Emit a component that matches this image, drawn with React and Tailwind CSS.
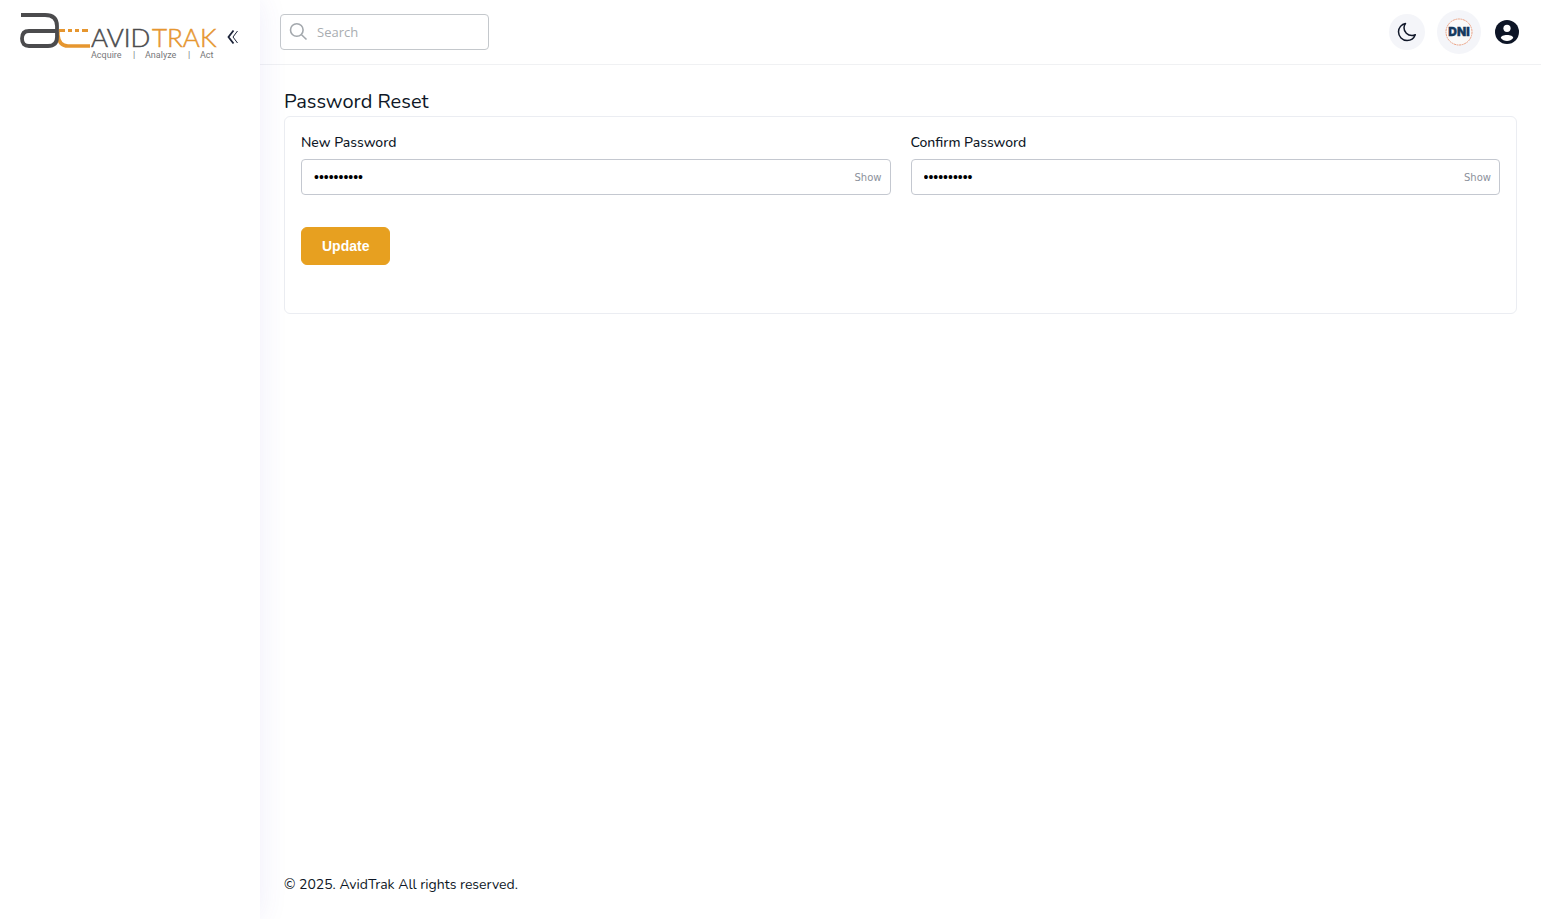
import { useState } from "react";

const Logo = () => (
  <svg width="198" height="50" viewBox="0 0 198 50" role="img" aria-label="AvidTrak">
    <path
      d="M39 18.500h6M48 18.500h4M55 18.500h4M62 18.500h6"
      fill="none"
      stroke="#e6962f"
      strokeWidth="3"
    />
    <path
      d="M38 20v3q1 11 10 11h22"
      fill="none"
      stroke="#e6962f"
      strokeWidth="3.500"
    />
    <path
      d="M1 3h24q12 0 12 11v11q0 9-9 9H9q-7 0-7-7.500t7-7.500h27"
      fill="none"
      stroke="#4b4b4d"
      strokeWidth="3.800"
    />
    <g
      className="font-['Lato',sans-serif] text-[26px] font-light"
      strokeWidth="0.500"
    >
      <text x="71" y="35" fill="#4b4b4d" stroke="#4b4b4d">
        AVID
      </text>
      <text x="132" y="35" fill="#e6962f" stroke="#e6962f">
        TRAK
      </text>
    </g>
    <g className="font-['Roboto',sans-serif] text-[9px]" fill="#77777a">
      <text x="71" y="46">Acquire</text>
      <text x="113" y="46">|</text>
      <text x="125" y="46">Analyze</text>
      <text x="168" y="46">|</text>
      <text x="180" y="46">Act</text>
    </g>
  </svg>
);

const Sidebar = () => (
  <aside className="relative z-10 w-[260px] shrink-0 bg-white shadow-[0_0_28px_0_rgba(82,63,205,0.09)]">
    <div className="flex items-center gap-2 pt-3 pl-5">
      <Logo />
      <button type="button" aria-label="Collapse menu" className="text-[#1b2338]">
        <svg width="14" height="16" viewBox="0 0 14 16" fill="none" stroke="currentColor">
          <path d="M7.500 1.500L2.500 8l5 6.500" strokeWidth="1.800" />
          <path d="M11.500 2L7 8l4.500 6" strokeWidth="1" />
        </svg>
      </button>
    </div>
  </aside>
);

const Header = () => (
  <header className="flex items-center justify-between border-b border-[#f0f1f3] py-[10px] pr-[22px] pl-5">
    <label className="flex h-9 w-[209px] items-center gap-2 rounded border border-[#c4c8cc] px-2">
      <svg
        width="20"
        height="20"
        viewBox="0 0 20 20"
        className="shrink-0"
        fill="none"
        stroke="#a3a8ad"
        strokeWidth="1.600"
        aria-hidden="true"
      >
        <circle cx="7.800" cy="8" r="6.300" />
        <path d="M12.300 12.500l5.200 5" />
      </svg>
      <input
        type="search"
        placeholder="Search"
        aria-label="Search"
        className="w-full min-w-0 pt-0.5 font-['Open_Sans',sans-serif] text-[13px] outline-none placeholder:text-[#a9adb1]"
      />
    </label>

    <div className="flex items-center gap-3">
      <button
        type="button"
        aria-label="Dark mode"
        className="flex size-9 items-center justify-center rounded-full bg-[#f4f5f9]"
      >
        <svg
          width="20"
          height="20"
          viewBox="0 0 20 20"
          fill="none"
          stroke="#101729"
          strokeWidth="1.500"
          strokeLinejoin="round"
        >
          <path d="M8.500 1.500C4.500 2.200 1.500 5.700 1.500 9.800c0 4.800 3.800 8.700 8.600 8.700 3.700 0 6.900-2.300 8.200-5.700-1.100.5-2.200.7-3.300.7-4.500 0-8-3.500-8-7.800 0-1.500.5-3 1.500-4.200z" />
        </svg>
      </button>
      <button
        type="button"
        aria-label="DNI"
        className="flex size-11 items-center justify-center rounded-full bg-[#f4f5f9]"
      >
        <svg width="28" height="28" viewBox="0 0 28 28">
          <circle
            cx="14"
            cy="14"
            r="13"
            fill="#fafafa"
            stroke="#eba183"
            strokeWidth="1"
            strokeDasharray="2 0.600"
          />
          <text
            x="14"
            y="18"
            textAnchor="middle"
            className="font-['Inter',sans-serif] text-[12px] font-black"
            fill="#163a5f"
            stroke="#163a5f"
            strokeWidth="0.300"
          >
            DNI
          </text>
        </svg>
      </button>
      <button type="button" aria-label="Account" className="ml-0.5">
        <svg width="24" height="24" viewBox="0 0 24 24">
          <circle cx="12" cy="12" r="12" fill="#0d1526" />
          <circle cx="12" cy="8.300" r="3.600" fill="#fff" />
          <path d="M12 15c-3.400 0-6.200 1.200-6.200 3 1.500 1.900 3.700 3 6.200 3s4.700-1.100 6.200-3c0-1.800-2.800-3-6.200-3z" fill="#fff" />
        </svg>
      </button>
    </div>
  </header>
);

const PasswordField = ({ id, label }) => {
  const [value, setValue] = useState("password12");
  const [visible, setVisible] = useState(false);

  return (
    <div>
      <label htmlFor={id} className="block text-sm leading-5 font-medium">
        {label}
      </label>
      <div className="mt-1.5 flex h-9 items-center rounded border border-[#c4c8d0] pr-2 pl-3">
        <input
          id={id}
          type={visible ? "text" : "password"}
          value={value}
          onChange={(e) => setValue(e.target.value)}
          className="min-w-0 flex-1 font-['Liberation_Sans',sans-serif] text-sm text-black outline-none"
        />
        <button
          type="button"
          onClick={() => setVisible(!visible)}
          className="font-['DejaVu_Sans',sans-serif] text-[10px] text-[#8c919b]"
        >
          {visible ? "Hide" : "Show"}
        </button>
      </div>
    </div>
  );
};

const App = () => {
  return (
    <div className="flex min-h-screen bg-white font-['Nunito','Open_Sans',sans-serif] text-[#0e1726]">
      <Sidebar />
      <div className="flex min-w-0 flex-1 flex-col">
        <Header />
        <main className="flex-1 px-6 pt-[23px]">
          <h1 className="text-xl leading-7">Password Reset</h1>
          <form
            className="rounded-md border border-[#ebedf2] px-4 pt-4 pb-12"
            onSubmit={(e) => e.preventDefault()}
          >
            <div className="grid grid-cols-2 gap-5">
              <PasswordField id="new-password" label="New Password" />
              <PasswordField id="confirm-password" label="Confirm Password" />
            </div>
            <button
              type="submit"
              className="mt-8 h-[38px] rounded-md border border-[#e7a020] bg-[#e7a020] px-5 font-['Liberation_Sans',sans-serif] text-sm font-bold text-white"
            >
              Update
            </button>
          </form>
        </main>
        <footer className="px-6 pb-6 text-sm">© 2025. AvidTrak All rights reserved.</footer>
      </div>
    </div>
  );
};

export default App;
